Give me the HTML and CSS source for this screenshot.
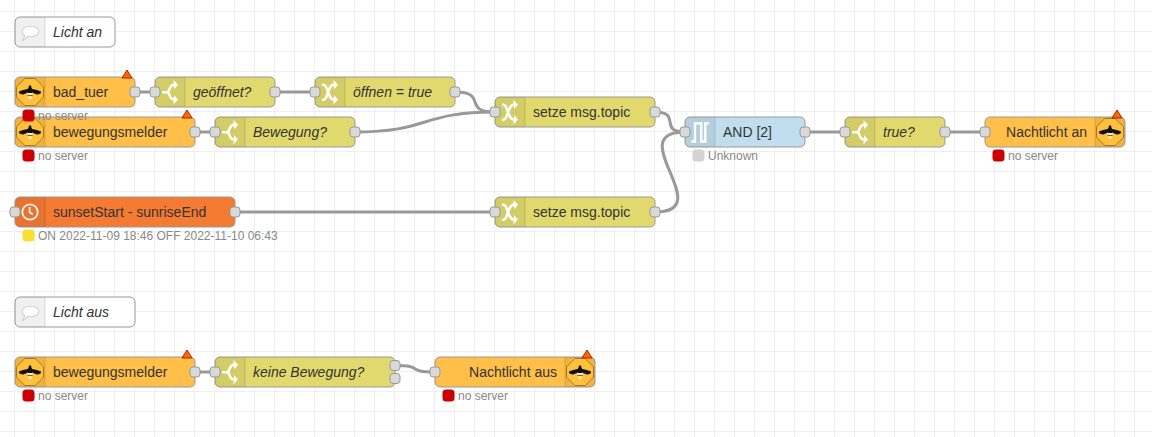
FILE: index.html
```html
<!DOCTYPE html>
<html lang="de">
<head>
<meta charset="utf-8">
<title>Nachtlicht Flow</title>
<link rel="stylesheet" href="styles.css">
</head>
<body>
<main class="workspace">
<svg class="flow" width="1152" height="437" viewBox="0 0 1152 437">
  <defs>
    <pattern id="grid" x="14" y="11" width="20" height="20" patternUnits="userSpaceOnUse">
      <path class="grid-line" d="M.5 0V20M0 .5H20"/>
    </pattern>
    <g id="port"><rect class="port" x="-5" y="-5" width="10" height="10" rx="3"/></g>
    <g id="error"><path class="error" d="M-5 4h10l-5-8z"/></g>
    <g id="shade"><path class="shade" d="M5 0H30V30H5A5 5 0 0 1 0 25V5A5 5 0 0 1 5 0z"/><path class="divider" d="M30 .5V29.5"/></g>
    <g id="shade-right"><path class="shade" d="M0 0H25A5 5 0 0 1 30 5V25A5 5 0 0 1 25 30H0z"/><path class="divider" d="M0 .5V29.5"/></g>
    <g id="dot"><rect x="9" y="34" width="9" height="9" rx="2"/></g>
    <g id="icon-switch">
      <path class="stroke-thick" d="M7 15.2H12.8M12.3 15.2C15.8 14 13.2 8 19.5 7.8M12.3 15.2C15.8 16.4 13.2 22.4 19.5 22.6"/>
      <path class="solid" d="M18.4 3L23 7.8L19.2 12.2zM19.2 18.2L23 22.6L18.4 27.4z"/>
    </g>
    <g id="icon-change">
      <path class="stroke-thick" d="M7 7.8H8.6C13.2 8 12 22.6 19.5 22.8M7 22.8H8.6C13.2 22.6 12 8 19.5 7.6"/>
      <path class="solid" d="M18.4 3L23 7.8L19.2 12.2zM19.2 18.2L23 22.6L18.4 27.4z"/>
    </g>
    <g id="icon-pulse"><path class="stroke-pulse" d="M6.3 24.5H10V6.4H16.3V24.5H20.3V6.4H24"/></g>
    <g id="icon-clock"><circle class="clock" cx="15" cy="15" r="7.7"/><path class="clock" d="M14.6 10V15.3L17.8 17.6"/></g>
    <g id="icon-comment"><path class="bubble" d="M15.3 9.2C20 9.2 24 11.5 24 14.5S20 19.8 15.3 19.8C14.2 19.8 13.2 19.7 12.3 19.4C11 21.4 9.2 23 7.3 23.6C8.7 22 9.4 20.4 9.6 18.5C8 17.5 6.8 16 6.8 14.5C6.8 11.5 10.6 9.2 15.3 9.2z"/></g>
    <g id="icon-bee">
      <path class="hive" d="M9.8 1.5H20.2L28.5 9.8V20.2L20.2 28.5H9.8L1.5 20.2V9.8z"/>
      <path class="bee-tail" d="M12.4 15H17.6C18 18 17.2 21 15 23C12.8 21 12 18 12.4 15z"/>
      <path class="bee-stripe" d="M12.4 18.6H17.6"/>
      <path class="bee" d="M15 8L16.4 9.4V10.8L17.3 12C20.3 12.6 23.6 13.3 25.8 14.6C27 16.4 24 17.7 22 17.4C20 17.1 18 16 17.2 15.2L16.8 16H13.2L12.8 15.2C12 16 10 17.1 8 17.4C6 17.7 3 16.4 4.2 14.6C6.4 13.3 9.7 12.6 12.7 12L13.6 10.8V9.4z"/>
    </g>
  </defs>

  <rect width="1152" height="437" fill="url(#grid)"/>

  <g class="wires">
    <path d="M135 92H155"/>
    <path d="M275 92H315"/>
    <path d="M455 92C488.5 92 461.5 112 495 112"/>
    <path d="M195 132H215"/>
    <path d="M355 132C430 132 420 112 495 112"/>
    <path d="M655 112C682 112 658 132 685 132"/>
    <path d="M235 212H495"/>
    <path d="M655 212C719 212 621 132 685 132"/>
    <path d="M805 132H845"/>
    <path d="M945 132H985"/>
    <path d="M195 372H215"/>
    <path d="M395 365.5C425.4 365.5 404.6 372 435 372"/>
  </g>

  <g class="node comment" transform="translate(15 17)">
    <rect class="body" width="100" height="30" rx="5"/><use href="#shade"/><use href="#icon-comment"/>
    <text class="label italic" x="38" y="20">Licht an</text>
  </g>
  <g class="node comment" transform="translate(15 297)">
    <rect class="body" width="120" height="30" rx="5"/><use href="#shade"/><use href="#icon-comment"/>
    <text class="label italic" x="38" y="20">Licht aus</text>
  </g>

  <g class="node device" transform="translate(15 117)">
    <rect class="body" width="180" height="30" rx="5"/><use href="#shade"/><use href="#icon-bee"/>
    <text class="label" x="38" y="20">bewegungsmelder</text>
    <use href="#port" x="180" y="15"/><use href="#error" x="172" y="-3"/>
    <use class="red" href="#dot"/><text class="status" x="23" y="43">no server</text>
  </g>
  <g class="node device" transform="translate(15 77)">
    <rect class="body" width="120" height="30" rx="5"/><use href="#shade"/><use href="#icon-bee"/>
    <text class="label" x="38" y="20">bad_tuer</text>
    <use href="#port" x="120" y="15"/><use href="#error" x="112" y="-3"/>
    <use class="red" href="#dot"/><text class="status" x="23" y="43">no server</text>
  </g>
  <g class="node logic" transform="translate(155 77)">
    <rect class="body" width="120" height="30" rx="5"/><use href="#shade"/><use href="#icon-switch"/>
    <text class="label italic" x="38" y="20">geöffnet?</text>
    <use href="#port" y="15"/><use href="#port" x="120" y="15"/>
  </g>
  <g class="node logic" transform="translate(315 77)">
    <rect class="body" width="140" height="30" rx="5"/><use href="#shade"/><use href="#icon-change"/>
    <text class="label italic" x="38" y="20">öffnen = true</text>
    <use href="#port" y="15"/><use href="#port" x="140" y="15"/>
  </g>
  <g class="node logic" transform="translate(215 117)">
    <rect class="body" width="140" height="30" rx="5"/><use href="#shade"/><use href="#icon-switch"/>
    <text class="label italic" x="38" y="20">Bewegung?</text>
    <use href="#port" y="15"/><use href="#port" x="140" y="15"/>
  </g>
  <g class="node logic" transform="translate(495 97)">
    <rect class="body" width="160" height="30" rx="5"/><use href="#shade"/><use href="#icon-change"/>
    <text class="label" x="38" y="20">setze msg.topic</text>
    <use href="#port" y="15"/><use href="#port" x="160" y="15"/>
  </g>
  <g class="node gate" transform="translate(685 117)">
    <rect class="body" width="120" height="30" rx="5"/><use href="#shade"/><use href="#icon-pulse"/>
    <text class="label" x="38" y="20">AND [2]</text>
    <use href="#port" y="15"/><use href="#port" x="120" y="15"/>
    <use class="grey" href="#dot"/><text class="status" x="23" y="43">Unknown</text>
  </g>
  <g class="node logic" transform="translate(845 117)">
    <rect class="body" width="100" height="30" rx="5"/><use href="#shade"/><use href="#icon-switch"/>
    <text class="label italic" x="38" y="20">true?</text>
    <use href="#port" y="15"/><use href="#port" x="100" y="15"/>
  </g>
  <g class="node device" transform="translate(985 117)">
    <rect class="body" width="140" height="30" rx="5"/><use href="#shade-right" x="110"/><use href="#icon-bee" x="110"/>
    <text class="label end" x="102" y="20">Nachtlicht an</text>
    <use href="#port" y="15"/><use href="#error" x="132" y="-3"/>
    <use class="red" href="#dot"/><text class="status" x="23" y="43">no server</text>
  </g>
  <g class="node timer" transform="translate(15 197)">
    <rect class="body" width="220" height="30" rx="5"/><use href="#shade"/><use href="#icon-clock"/>
    <text class="label" x="38" y="20">sunsetStart - sunriseEnd</text>
    <use href="#port" y="15"/><use href="#port" x="220" y="15"/>
    <use class="yellow" href="#dot"/><text class="status" x="23" y="43">ON 2022-11-09 18:46 OFF 2022-11-10 06:43</text>
  </g>
  <g class="node logic" transform="translate(495 197)">
    <rect class="body" width="160" height="30" rx="5"/><use href="#shade"/><use href="#icon-change"/>
    <text class="label" x="38" y="20">setze msg.topic</text>
    <use href="#port" y="15"/><use href="#port" x="160" y="15"/>
  </g>
  <g class="node device" transform="translate(15 357)">
    <rect class="body" width="180" height="30" rx="5"/><use href="#shade"/><use href="#icon-bee"/>
    <text class="label" x="38" y="20">bewegungsmelder</text>
    <use href="#port" x="180" y="15"/><use href="#error" x="172" y="-3"/>
    <use class="red" href="#dot"/><text class="status" x="23" y="43">no server</text>
  </g>
  <g class="node logic" transform="translate(215 357)">
    <rect class="body" width="180" height="30" rx="5"/><use href="#shade"/><use href="#icon-switch"/>
    <text class="label italic" x="38" y="20">keine Bewegung?</text>
    <use href="#port" y="15"/><use href="#port" x="180" y="8.5"/><use href="#port" x="180" y="21.5"/>
  </g>
  <g class="node device" transform="translate(435 357)">
    <rect class="body" width="160" height="30" rx="5"/><use href="#shade-right" x="130"/><use href="#icon-bee" x="130"/>
    <text class="label end" x="122" y="20">Nachtlicht aus</text>
    <use href="#port" y="15"/><use href="#error" x="152" y="-3"/>
    <use class="red" href="#dot"/><text class="status" x="23" y="43">no server</text>
  </g>
</svg>
</main>
</body>
</html>
```
FILE: styles.css
```css
body { margin: 0; background: #fff; overflow: hidden; }
.flow { display: block; font-family: "Liberation Sans", Arial, sans-serif; }
.grid-line { stroke: #eee; fill: none; }
.wires path { stroke: #999; stroke-width: 3; fill: none; }
.body { stroke: #999; stroke-width: 1; }
.comment .body { fill: #fff; }
.device .body { fill: #ffbf48; }
.logic .body { fill: #e2d96e; }
.gate .body { fill: #c0deed; }
.timer .body { fill: #f57b32; }
.shade { fill: #000; fill-opacity: .06; }
.divider { stroke: #000; stroke-opacity: .13; }
.port { fill: #d9d9d9; stroke: #999; }
.error { fill: #ff6600; stroke: #a82800; }
.label { font-size: 14px; fill: #333; }
.italic { font-style: italic; }
.end { text-anchor: end; }
.status { font-size: 12px; fill: #888; }
.red { fill: #c00; stroke: #c00; stroke-width: 3; }
.yellow { fill: #f9df31; stroke: #f9df31; stroke-width: 3; }
.grey { fill: #d3d3d3; stroke: #d3d3d3; stroke-width: 3; }
.stroke-thick { fill: none; stroke: #fff; stroke-width: 2.5; }
.stroke-pulse { fill: none; stroke: #fff; stroke-width: 2.3; }
.solid { fill: #fff; }
.clock { fill: none; stroke: #fff; stroke-opacity: .9; stroke-width: 1.8; }
.bubble { fill: #fff; stroke: #d0d0d0; stroke-width: 1.1; }
.hive { fill: #ffc03c; stroke: #8f6420; stroke-width: .8; }
.bee { fill: #111; }
.bee-tail { fill: #ffe9b5; stroke: none; }
.bee-stripe { fill: none; stroke: #5a3d12; stroke-width: .9; }
```
